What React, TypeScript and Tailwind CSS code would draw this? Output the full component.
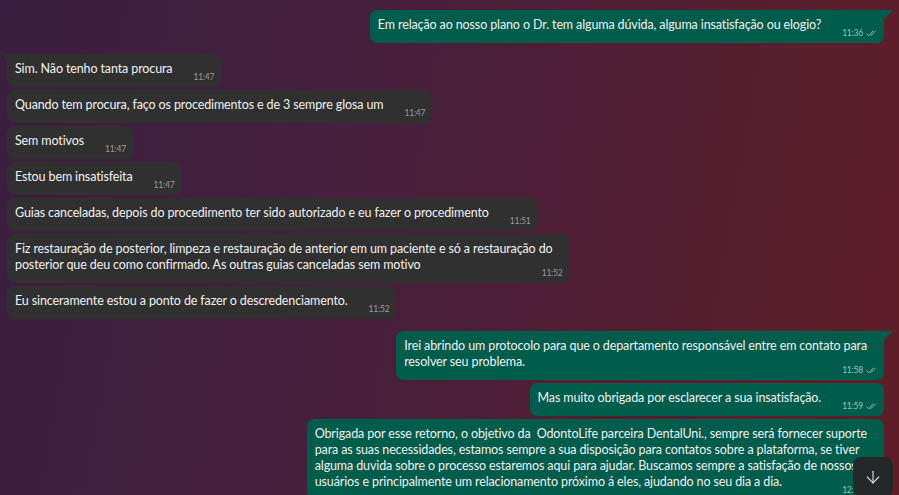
import { ArrowDown } from "lucide-react";

type Message = {
    lines: string[];
    time: string;
    tail?: boolean;
};

const firstQuestion: Message[] = [
    {
        lines: ["Em relação ao nosso plano o Dr. tem alguma dúvida, alguma insatisfação ou elogio?"],
        time: "11:36",
        tail: true,
    },
];

const replies: Message[] = [
    { lines: ["Sim. Não tenho tanta procura"], time: "11:47", tail: true },
    { lines: ["Quando tem procura, faço os procedimentos e de 3 sempre glosa um"], time: "11:47" },
    { lines: ["Sem motivos"], time: "11:47" },
    { lines: ["Estou bem insatisfeita"], time: "11:47" },
    { lines: ["Guias canceladas, depois do procedimento ter sido autorizado e eu fazer o procedimento"], time: "11:51" },
    {
        lines: [
            "Fiz restauração de posterior, limpeza e restauração de anterior em um paciente e só a restauração do",
            "posterior que deu como confirmado. As outras guias canceladas sem motivo",
        ],
        time: "11:52",
    },
    { lines: ["Eu sinceramente estou a ponto de fazer o descredenciamento."], time: "11:52" },
];

const answers: Message[] = [
    {
        lines: [
            "Irei abrindo um protocolo para que o departamento responsável entre em contato para",
            "resolver seu problema.",
        ],
        time: "11:58",
        tail: true,
    },
    { lines: ["Mas muito obrigada por esclarecer a sua insatisfação."], time: "11:59" },
    {
        lines: [
            "Obrigada por esse retorno, o objetivo da  OdontoLife parceira DentalUni., sempre será fornecer suporte",
            "para as suas necessidades, estamos sempre a sua disposição para contatos sobre a plataforma, se tiver",
            "alguma duvida sobre o processo estaremos aqui para ajudar. Buscamos sempre a satisfação de nossos",
            "usuários e principalmente um relacionamento próximo á eles, ajudando no seu dia a dia.",
        ],
        time: "12:00",
    },
];

const DoubleCheck = () => (
    <svg width="11" height="7" viewBox="0 0 11 7" fill="none" className="ml-[3px]">
        <path d="M0.6 3.6 L2.8 5.8 L7.2 0.8" stroke="currentColor" strokeWidth="0.9" />
        <path d="M4.6 5.8 L9.6 0.8" stroke="currentColor" strokeWidth="0.9" />
    </svg>
);

const Meta = ({ time, out }: { time: string; out: boolean }) => (
    <span
        className={`flex items-center shrink-0 text-[8.5px] leading-[12px] tracking-[-0.2px] ${
            out ? "text-[#9fc2b9]" : "text-[#9c9c9c]"
        }`}
    >
        {time}
        {out && <DoubleCheck />}
    </span>
);

const Bubble = ({ msg, out }: { msg: Message; out: boolean }) => {
    const multi = msg.lines.length > 1;
    let corner = "";
    if (msg.tail) corner = out ? "rounded-tr-none" : "rounded-tl-none";

    return (
        <div
            className={`relative rounded-[7px] ${corner} pl-[8px] ${multi ? "pr-[17px]" : "pr-[7px]"} pt-[7px] pb-[4px] ${
                out ? "bg-[#005c4b]" : "bg-[#303030]"
            }`}
        >
            {msg.tail && out && (
                <svg width="9" height="9" viewBox="0 0 9 9" className="absolute top-0 -right-[9px]">
                    <path d="M0 0 H8 Q9 0 8.3 0.8 L0 9 Z" fill="#005c4b" />
                </svg>
            )}
            {msg.tail && !out && (
                <svg width="5" height="8" viewBox="0 0 5 8" className="absolute top-0 -left-[5px]">
                    <path d="M5 0 H0.8 Q0 0 0.5 0.7 L5 8 Z" fill="#303030" />
                </svg>
            )}
            {multi ? (
                <>
                    {msg.lines.map((line, i) => (
                        <div key={i} className="w-fit whitespace-pre leading-[16px]">
                            {line}
                        </div>
                    ))}
                    <div className="flex justify-end -mt-[6px] -mr-[10px]">
                        <Meta time={msg.time} out={out} />
                    </div>
                </>
            ) : (
                <div className="flex items-end">
                    <p className="whitespace-pre leading-[16px] mb-[6px]">{msg.lines[0]}</p>
                    <span className="ml-[21px]">
                        <Meta time={msg.time} out={out} />
                    </span>
                </div>
            )}
        </div>
    );
};

export default function App() {
    return (
        <div className="relative h-[495px] w-full overflow-hidden bg-[linear-gradient(100deg,#3b1e41_0%,#461f3c_40%,#5f1e27_100%)] font-['Lato','Noto_Sans',sans-serif] text-[12.5px] tracking-[-0.12px] text-[#f0f0f0]">
            <div className="flex flex-col pl-[7px] pr-[15px] pt-[10px]">
                <div className="flex flex-col items-end gap-[3px]">
                    {firstQuestion.map((m, i) => (
                        <Bubble key={i} msg={m} out />
                    ))}
                </div>
                <div className="mt-[11px] flex flex-col items-start gap-[3px]">
                    {replies.map((m, i) => (
                        <Bubble key={i} msg={m} out={false} />
                    ))}
                </div>
                <div className="mt-[12px] flex flex-col items-end gap-[3px]">
                    {answers.map((m, i) => (
                        <Bubble key={i} msg={m} out />
                    ))}
                </div>
            </div>

            <button className="absolute right-[6px] -bottom-[2px] flex h-[40px] w-[40px] items-center justify-center rounded-[8px] bg-[#242829] text-[#e6e6e6]">
                <ArrowDown size={20} strokeWidth={1.3} />
            </button>
        </div>
    );
}
